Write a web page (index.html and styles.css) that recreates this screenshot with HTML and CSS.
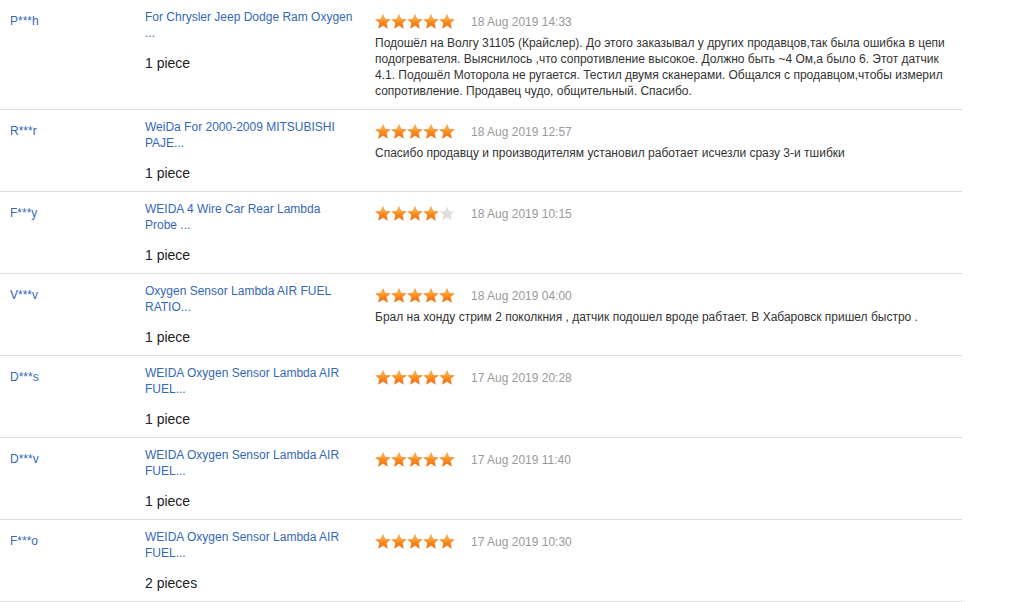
FILE: index.html
```html
<!DOCTYPE html>
<html lang="en">
<head>
    <meta charset="UTF-8">
    <meta name="viewport" content="width=device-width, initial-scale=1.0">
    <title>Feedback</title>
    <link rel="stylesheet" href="styles.css">
</head>
<body>
    <!-- общая звезда для рейтинга -->
    <svg class="defs" width="0" height="0">
        <defs>
            <linearGradient id="gold" x1="0" y1="0" x2="0" y2="1">
                <stop offset="0" stop-color="#ffc462"/>
                <stop offset="0.55" stop-color="#f98a1c"/>
                <stop offset="1" stop-color="#ee680b"/>
            </linearGradient>
            <symbol id="star" viewBox="0 0 16 15">
                <polygon points="8,0.6 10.1,5.2 15.3,5.6 11.4,9 12.6,14.3 8,11.5 3.4,14.3 4.6,9 0.7,5.6 5.9,5.2"/>
            </symbol>
        </defs>
    </svg>

    <div class="feedback">
        <div class="row">
            <div class="name"><a href="javascript:;">P***h</a></div>
            <div class="product">
                <a href="javascript:;">For Chrysler Jeep Dodge Ram Oxygen ...</a>
                <p class="qty">1 piece</p>
            </div>
            <div class="rating">
                <div class="head">
                    <span class="stars">
                        <svg class="on"><use href="#star"/></svg><svg class="on"><use href="#star"/></svg><svg class="on"><use href="#star"/></svg><svg class="on"><use href="#star"/></svg><svg class="on"><use href="#star"/></svg>
                    </span>
                    <span class="date">18 Aug 2019 14:33</span>
                </div>
                <p class="text">Подошёл на Волгу 31105 (Крайслер). До этого заказывал у других продавцов,так была ошибка в цепи подогревателя. Выяснилось ,что сопротивление высокое. Должно быть ~4 Ом,а было 6. Этот датчик 4.1. Подошёл Моторола не ругается. Тестил двумя сканерами. Общался с продавцом,чтобы измерил сопротивление. Продавец чудо, общительный. Спасибо.</p>
            </div>
        </div>

        <div class="row">
            <div class="name"><a href="javascript:;">R***r</a></div>
            <div class="product">
                <a href="javascript:;">WeiDa For 2000-2009 MITSUBISHI PAJE...</a>
                <p class="qty">1 piece</p>
            </div>
            <div class="rating">
                <div class="head">
                    <span class="stars">
                        <svg class="on"><use href="#star"/></svg><svg class="on"><use href="#star"/></svg><svg class="on"><use href="#star"/></svg><svg class="on"><use href="#star"/></svg><svg class="on"><use href="#star"/></svg>
                    </span>
                    <span class="date">18 Aug 2019 12:57</span>
                </div>
                <p class="text">Спасибо продавцу и производителям установил работает исчезли сразу 3-и тшибки</p>
            </div>
        </div>

        <div class="row">
            <div class="name"><a href="javascript:;">F***y</a></div>
            <div class="product">
                <a href="javascript:;">WEIDA 4 Wire Car Rear Lambda Probe ...</a>
                <p class="qty">1 piece</p>
            </div>
            <div class="rating">
                <div class="head">
                    <span class="stars">
                        <svg class="on"><use href="#star"/></svg><svg class="on"><use href="#star"/></svg><svg class="on"><use href="#star"/></svg><svg class="on"><use href="#star"/></svg><svg class="off"><use href="#star"/></svg>
                    </span>
                    <span class="date">18 Aug 2019 10:15</span>
                </div>
            </div>
        </div>

        <div class="row">
            <div class="name"><a href="javascript:;">V***v</a></div>
            <div class="product">
                <a href="javascript:;">Oxygen Sensor Lambda AIR FUEL RATIO...</a>
                <p class="qty">1 piece</p>
            </div>
            <div class="rating">
                <div class="head">
                    <span class="stars">
                        <svg class="on"><use href="#star"/></svg><svg class="on"><use href="#star"/></svg><svg class="on"><use href="#star"/></svg><svg class="on"><use href="#star"/></svg><svg class="on"><use href="#star"/></svg>
                    </span>
                    <span class="date">18 Aug 2019 04:00</span>
                </div>
                <p class="text">Брал на хонду стрим 2 поколкния , датчик подошел вроде рабтает. В Хабаровск пришел быстро .</p>
            </div>
        </div>

        <div class="row">
            <div class="name"><a href="javascript:;">D***s</a></div>
            <div class="product">
                <a href="javascript:;">WEIDA Oxygen Sensor Lambda AIR FUEL...</a>
                <p class="qty">1 piece</p>
            </div>
            <div class="rating">
                <div class="head">
                    <span class="stars">
                        <svg class="on"><use href="#star"/></svg><svg class="on"><use href="#star"/></svg><svg class="on"><use href="#star"/></svg><svg class="on"><use href="#star"/></svg><svg class="on"><use href="#star"/></svg>
                    </span>
                    <span class="date">17 Aug 2019 20:28</span>
                </div>
            </div>
        </div>

        <div class="row">
            <div class="name"><a href="javascript:;">D***v</a></div>
            <div class="product">
                <a href="javascript:;">WEIDA Oxygen Sensor Lambda AIR FUEL...</a>
                <p class="qty">1 piece</p>
            </div>
            <div class="rating">
                <div class="head">
                    <span class="stars">
                        <svg class="on"><use href="#star"/></svg><svg class="on"><use href="#star"/></svg><svg class="on"><use href="#star"/></svg><svg class="on"><use href="#star"/></svg><svg class="on"><use href="#star"/></svg>
                    </span>
                    <span class="date">17 Aug 2019 11:40</span>
                </div>
            </div>
        </div>

        <div class="row">
            <div class="name"><a href="javascript:;">F***o</a></div>
            <div class="product">
                <a href="javascript:;">WEIDA Oxygen Sensor Lambda AIR FUEL...</a>
                <p class="qty">2 pieces</p>
            </div>
            <div class="rating">
                <div class="head">
                    <span class="stars">
                        <svg class="on"><use href="#star"/></svg><svg class="on"><use href="#star"/></svg><svg class="on"><use href="#star"/></svg><svg class="on"><use href="#star"/></svg><svg class="on"><use href="#star"/></svg>
                    </span>
                    <span class="date">17 Aug 2019 10:30</span>
                </div>
            </div>
        </div>
    </div>
</body>
</html>
```

FILE: styles.css
```css
*{
    margin: 0;
    padding: 0;
}
body {
    font-family: "Liberation Sans", Arial, sans-serif;
    font-size: 12px;
    color: #333;
    background: #fff;
}
a {
    color: #3468b7;
    text-decoration: none;
}
.defs {
    position: absolute;
}
.feedback {
    width: 962px;
}
.feedback .row {
    display: grid;
    grid-template-columns: 145px 230px 587px;
    border-bottom: 1px solid #dcdcdc;
    padding: 9px 0 8px;
}
.feedback .name {
    padding-left: 10px;
    line-height: 24px;
}
.feedback .product {
    width: 208px;
    line-height: 16px;
}
.feedback .product .qty {
    margin-top: 12px;
    font-size: 14px;
    line-height: 20px;
    color: #222;
}
.feedback .rating .head {
    display: flex;
    align-items: center;
    height: 24px;
    margin-bottom: 2px;
}
.feedback .stars {
    display: flex;
    margin-top: 1px;
}
.feedback .stars svg {
    width: 16px;
    height: 15px;
}
.feedback .stars .on {
    fill: url(#gold);
    stroke: #e8730f;
    stroke-width: 0.4;
}
.feedback .stars .off {
    fill: #dedede;
}
.feedback .date {
    margin-left: 16px;
    color: #999;
    margin-top: 2px;
}
.feedback .text {
    width: 580px;
    line-height: 16px;
    margin-bottom: 2px;
    color: #333;
}
```
